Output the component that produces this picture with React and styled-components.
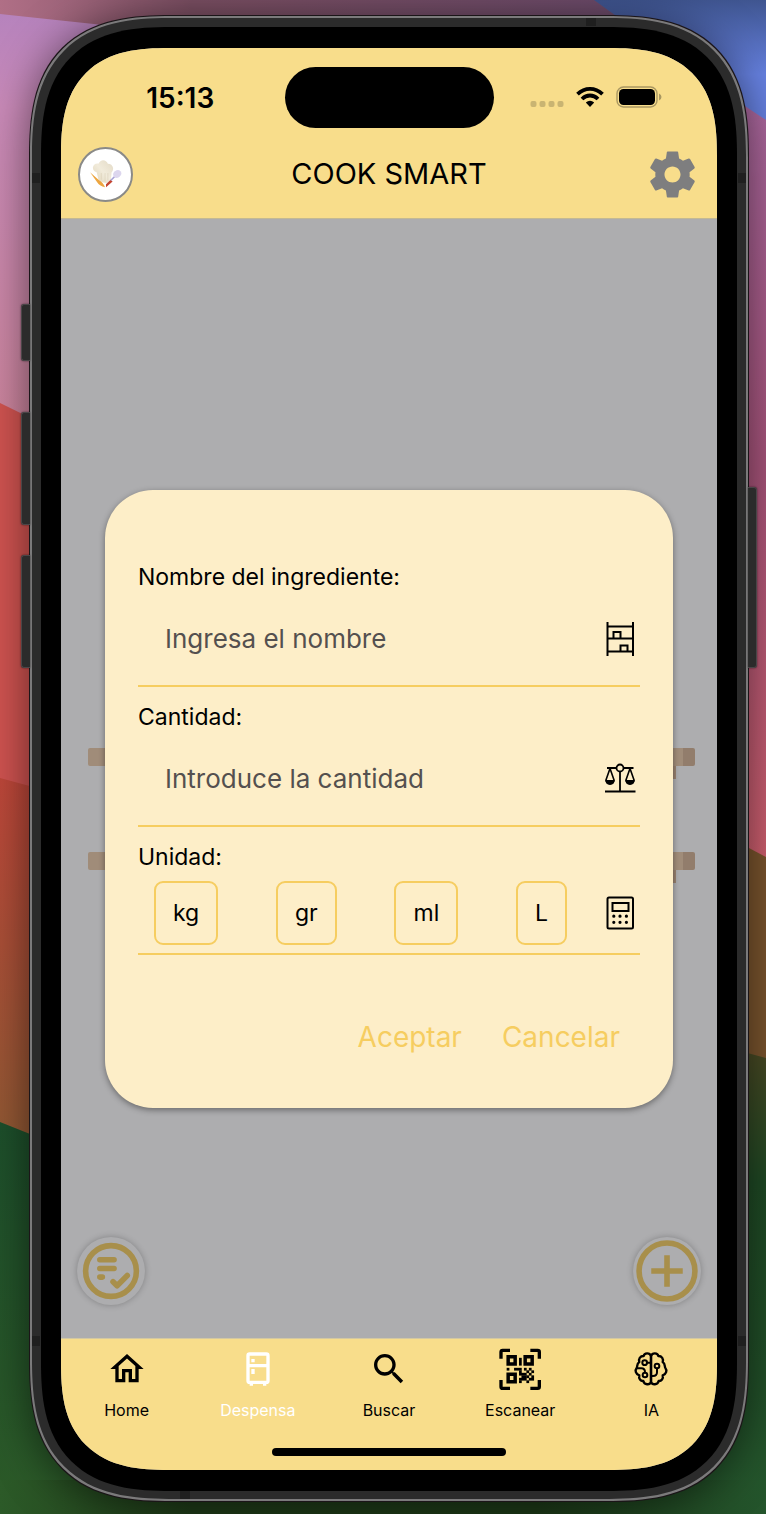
import React from "react";
import styled, { createGlobalStyle } from "styled-components";

const colors = {
  bar: "#f8dd8b",
  card: "#fdeec8",
  accent: "#f6cd60",
  dim: "#adadaf",
  fab: "#a88f4b",
  frame: "#2b2b2b",
};

const Global = createGlobalStyle`
  *, *::before, *::after { box-sizing: border-box; }
  body { margin: 0; background: #1c3a1e; }
  body, button, input { font-family: Inter, "Liberation Sans", sans-serif; }
  button { border: 0; padding: 0; background: none; color: inherit; cursor: pointer; }
  svg { display: block; }
`;

const Page = styled.div`
  position: relative;
  display: flex;
  min-height: 100vh;
  padding: 16px 18px 13px 30px;
  overflow: hidden;
`;

const Wallpaper = styled.svg`
  position: absolute;
  inset: 0;
  width: 100%;
  height: 100%;
`;

const Phone = styled.div`
  position: relative;
  flex: 1;
  display: flex;
  min-width: 0;
  padding: 9px 9px 8px;
  border: 2px solid #7b7a7b;
  background: ${colors.frame};
  border-radius: 118px;
  box-shadow: 0 0 0 1px #1b1518, 0 4px 44px rgba(0, 0, 0, 0.55);
  @supports (corner-shape: squircle) {
    border-radius: 142px;
    corner-shape: superellipse(1.4);
  }
`;

const Bezel = styled.div`
  flex: 1;
  display: flex;
  min-width: 0;
  padding: 21px 20px;
  background: #000;
  border-radius: 108px;
  @supports (corner-shape: squircle) {
    border-radius: 130px;
    corner-shape: superellipse(1.4);
  }
`;

const Screen = styled.div`
  flex: 1;
  display: flex;
  flex-direction: column;
  min-width: 0;
  overflow: hidden;
  background: ${colors.dim};
  border-radius: 88px;
  @supports (corner-shape: squircle) {
    border-radius: 108px;
    corner-shape: superellipse(1.4);
  }
`;

const SideButton = styled.span`
  position: absolute;
  ${(p) => p.$side}: -11px;
  top: ${(p) => p.$top}px;
  width: 9px;
  height: ${(p) => p.$height}px;
  background: ${colors.frame};
  border: 1px solid #4a4648;
  border-${(p) => (p.$side === "left" ? "right" : "left")}: 0;
  border-radius: ${(p) => (p.$side === "left" ? "3px 0 0 3px" : "0 3px 3px 0")};
  box-shadow: 0 0 2px rgba(0, 0, 0, 0.6);
`;

const Antenna = styled.span`
  position: absolute;
  background: #1f1f1f;
  ${(p) => p.$edge}: 0;
  ${(p) => p.$from}: ${(p) => p.$at}px;
  width: ${(p) => (p.$edge === "left" || p.$edge === "right" ? 8 : 10)}px;
  height: ${(p) => (p.$edge === "left" || p.$edge === "right" ? 10 : 8)}px;
`;

const StatusBar = styled.div`
  display: grid;
  grid-template-columns: 1fr 209px 1fr;
  align-items: center;
  padding: 19px 0 2px;
  background: ${colors.bar};
`;

const Clock = styled.time`
  padding-left: 15px;
  text-align: center;
  font-size: 28px;
  line-height: 32px;
  font-weight: 600;
`;

const Island = styled.div`
  height: 61px;
  border-radius: 31px;
  background: #000;
`;

const StatusIcons = styled.div`
  display: flex;
  align-items: center;
  gap: 12px;
  padding: 0 0 2px 36px;
`;

const Header = styled.header`
  display: grid;
  grid-template-columns: 55px 1fr 55px;
  align-items: center;
  height: 89px;
  padding: 0 17px;
  background: ${colors.bar};
  border-bottom: 1px solid #c3b994;
`;

const Logo = styled.a`
  display: grid;
  place-items: center;
  height: 55px;
  border: 2px solid #8a8a88;
  border-radius: 50%;
  background: #fff;
`;

const Title = styled.h1`
  margin: 0;
  text-align: center;
  font-size: 29px;
  line-height: 36px;
  font-weight: 400;
`;

const Main = styled.main`
  flex: 1;
  display: grid;
  grid-template-columns: minmax(0, 1fr);
  > * { grid-area: 1 / 1; }
`;

const Shelves = styled.div`
  align-self: center;
  display: grid;
  gap: 86px;
  margin: 61px 22px 0 27px;
`;

const Shelf = styled.div`
  position: relative;
  height: 18px;
  border-radius: 2px;
  background: linear-gradient(to left, #927d6c 12px, #a08c79 12px);
  &::after {
    content: "";
    position: absolute;
    top: 18px;
    right: 19px;
    width: 8px;
    height: 13px;
    background: #98816f;
  }
`;

const Fabs = styled.div`
  align-self: end;
  display: flex;
  justify-content: space-between;
  padding: 0 16px 33px;
`;

const Fab = styled.button`
  display: grid;
  place-items: center;
  width: 68px;
  height: 68px;
  border-radius: 50%;
  background: ${colors.dim};
  color: ${colors.fab};
  box-shadow: 0 0 6px rgba(0, 0, 0, 0.25);
`;

const Dialog = styled.form`
  position: relative;
  align-self: center;
  margin: 41px 44px 0;
  padding: 72px 33px 51px;
  background: ${colors.card};
  border-radius: 48px;
  box-shadow: 0 2px 6px rgba(0, 0, 0, 0.4);
`;

const Field = styled.div`
  border-bottom: 2px solid ${colors.accent};
  & + & { margin-top: 15px; }
`;

const Label = styled.label`
  display: block;
  font-size: 23px;
  line-height: 30px;
`;

const FieldRow = styled.div`
  display: flex;
  align-items: center;
  height: ${(p) => (p.$compact ? 81 : 93)}px;
  padding-left: ${(p) => (p.$compact ? 16 : 27)}px;
`;

const TextInput = styled.input`
  flex: 1;
  min-width: 0;
  height: 60px;
  padding: 0;
  border: 0;
  outline: 0;
  background: none;
  font-size: 26px;
  &::placeholder { color: #54504f; opacity: 1; }
`;

const Units = styled.div`
  flex: 1;
  display: flex;
  justify-content: space-between;
  padding-right: 33px;
`;

const Unit = styled.button`
  height: 64px;
  padding: 0 17px;
  border: 2px solid ${colors.accent};
  border-radius: 9px;
  font-size: 23px;
  color: #000;
`;

const Actions = styled.div`
  display: flex;
  justify-content: flex-end;
  gap: 40px;
  margin-top: 62px;
  padding-right: 20px;
`;

const Action = styled.button`
  color: ${colors.accent};
  font-size: 28px;
  line-height: 40px;
`;

const TabBar = styled.nav`
  background: ${colors.bar};
  border-top: 1px solid #d3c8a2;
`;

const Tabs = styled.div`
  display: grid;
  grid-template-columns: repeat(5, 1fr);
`;

const Tab = styled.a`
  display: grid;
  justify-items: center;
  gap: 10px;
  padding-top: 9px;
  color: ${(p) => (p.$active ? "#fff" : "#000")};
  font-size: 16px;
  line-height: 20px;
  text-decoration: none;
`;

const HomeBar = styled.div`
  width: 234px;
  height: 8px;
  margin: 28px auto 14px;
  border-radius: 4px;
  background: #000;
`;

const Glyph = ({ d }) => (
  <svg width="40" height="42" viewBox="0 0 24 24" fill="currentColor" aria-hidden="true">
    <path d={d} />
  </svg>
);

const HOME = "M12 5.69L17 10.19V18H15V12H9V18H7V10.19L12 5.69M12 3L2 12H5V20H11V14H13V20H19V12H22L12 3Z";
const FRIDGE =
  "M9,21V22H7V21A2,2 0 0,1 5,19V4A2,2 0 0,1 7,2H17A2,2 0 0,1 19,4V19A2,2 0 0,1 17,21V22H15V21H9M7,4V9H17V4H7M7,19H17V11H7V19M8,12H10V15H8V12M8,6H10V8H8V6Z";
const SEARCH =
  "M9.5,3A6.5,6.5 0 0,1 16,9.5C16,11.11 15.41,12.59 14.44,13.73L14.71,14H15.5L20.5,19L19,20.5L14,15.5V14.71L13.73,14.44C12.59,15.41 11.11,16 9.5,16A6.5,6.5 0 0,1 3,9.5A6.5,6.5 0 0,1 9.5,3M9.5,5C7,5 5,7 5,9.5C5,12 7,14 9.5,14C12,14 14,12 14,9.5C14,7 12,5 9.5,5Z";
const GEAR =
  "M19.43 12.98c.04-.32.07-.64.07-.98s-.03-.66-.07-.98l2.11-1.65c.19-.15.24-.42.12-.64l-2-3.46c-.12-.22-.39-.3-.61-.22l-2.49 1c-.52-.4-1.08-.73-1.69-.98l-.38-2.65C14.46 2.18 14.25 2 14 2h-4c-.25 0-.46.18-.49.42l-.38 2.65c-.61.25-1.17.59-1.69.98l-2.49-1c-.23-.09-.49 0-.61.22l-2 3.46c-.13.22-.07.49.12.64l2.11 1.65c-.04.32-.07.65-.07.98s.03.66.07.98l-2.11 1.65c-.19.15-.24.42-.12.64l2 3.46c.12.22.39.3.61.22l2.49-1c.52.4 1.08.73 1.69.98l.38 2.65c.03.24.24.42.49.42h4c.25 0 .46-.18.49-.42l.38-2.65c.61-.25 1.17-.59 1.69-.98l2.49 1c.23.09.49 0 .61-.22l2-3.46c.12-.22.07-.49-.12-.64l-2.11-1.65zM12 15.5c-1.93 0-3.5-1.57-3.5-3.5s1.57-3.5 3.5-3.5 3.5 1.57 3.5 3.5-1.57 3.5-3.5 3.5z";

const QR_CELLS = [
  [5, 1, 1, 3], [0, 5, 1, 1], [3, 5, 3, 1], [7, 5, 1, 1], [9, 5, 1, 1],
  [5, 6, 1, 1], [8, 6, 1, 1], [10, 6, 1, 1], [5, 7, 2, 1], [7, 7, 1, 1], [9, 7, 1, 1],
  [6, 8, 2, 1], [8, 8, 1, 1], [10, 8, 1, 1], [5, 9, 3, 1], [9, 9, 2, 1], [5, 10, 1, 1], [8, 10, 1, 1],
];

const QrIcon = () => (
  <svg width="42" height="42" viewBox="25 23 126 126" fill="none" stroke="currentColor" aria-hidden="true">
    <path d="M31 55V35Q31 30 36 30H58M119 30H141Q146 30 146 35V55M146 119V139Q146 144 141 144H119M58 144H36Q31 144 31 139V119" strokeWidth="10" />
    <path d="M52.500 49H73.500V71H52.500ZM103.500 49H124.500V71H103.500ZM52.500 102H73.500V124H52.500Z" strokeWidth="10.500" />
    <g fill="currentColor" stroke="none">
      {QR_CELLS.map(([x, y, w, h]) => (
        <rect key={`${x}-${y}`} x={48 + x * 7.4} y={45 + y * 7.5} width={w * 7.4 + 0.8} height={h * 7.5 + 0.8} />
      ))}
    </g>
  </svg>
);

const BrainIcon = () => (
  <svg width="36" height="42" viewBox="430 25 108 126" fill="none" stroke="currentColor" strokeWidth="7" strokeLinecap="round" strokeLinejoin="round" aria-hidden="true">
    <path d="M484 49C480 38 464 39 462 49C451 49 446 58 449 67C440 72 444 82 441 85C435 92 438 103 449 107C446 117 453 125 461 124C464 136 480 137 484 127Z" />
    <path d="M484 49C488 38 504 39 506 49C517 49 522 58 519 67C528 72 524 82 527 85C533 92 530 103 519 107C522 117 515 125 507 124C504 136 488 137 484 127Z" />
    <circle cx="465" cy="69" r="7" strokeWidth="6" />
    <circle cx="502" cy="79" r="7" strokeWidth="6" />
    <circle cx="466" cy="106" r="7" strokeWidth="6" />
    <path d="M473 69H484M441 86H455Q466 86 466 98M502 87V98Q502 109 490 109H484" strokeWidth="6" />
  </svg>
);

const ShelfIcon = () => (
  <svg width="40" height="40" viewBox="0 0 40 40" fill="none" stroke="#000" strokeWidth="2" aria-hidden="true">
    <path d="M7.500 3V37M33 3V37M7 7.500H33.500M7 19.500H33.500M7 32.500H33.500M13.500 19V13H20.500V19M20.500 32V26.500H27.500V32" />
  </svg>
);

const ScaleIcon = () => (
  <svg width="40" height="40" viewBox="0 0 40 40" fill="none" stroke="#000" strokeWidth="1.800" aria-hidden="true">
    <circle cx="20" cy="9" r="3.500" />
    <path d="M7 9H16.500M23.500 9H33.500M20 12.500V32.500M5 32.500H35.500" />
    <path d="M10 9.500L5.800 21.500M10 9.500L14.200 21.500M30 9.500L25.800 21.500M30 9.500L34.200 21.500" strokeWidth="1.600" />
    <path d="M5.500 21.500H14.500Q14 25.500 10 25.500Q6 25.500 5.500 21.500ZM25.500 21.500H34.500Q34 25.500 30 25.500Q26 25.500 25.500 21.500Z" fill="#000" strokeWidth="1" />
  </svg>
);

const CalculatorIcon = () => (
  <svg width="40" height="40" viewBox="0 0 40 40" fill="none" stroke="#000" strokeWidth="2" aria-hidden="true">
    <rect x="7.500" y="4.500" width="25.500" height="31" rx="1.500" />
    <rect x="12.500" y="10" width="16" height="8" />
    <path d="M13.800 23.200h.01M20 23.200h.01M26.400 23.200h.01M13.800 29.300h.01M20 29.300h.01M26.400 29.300h.01" strokeWidth="3.200" strokeLinecap="round" />
  </svg>
);

const ChefIcon = () => (
  <svg width="34" height="30" viewBox="0 0 36 32" aria-hidden="true">
    <defs>
      <linearGradient id="hat" x1="0" y1="1" x2="1" y2="0">
        <stop offset="0" stopColor="#e0d5ba" />
        <stop offset=".5" stopColor="#f1ebdb" />
        <stop offset="1" stopColor="#e3dac6" />
      </linearGradient>
    </defs>
    <path d="M8 14C2 13 3 4 10 5C12 0 18 0 20 5C26 5 27 12 24 14L23 24Q16 28 10 22Z" fill="url(#hat)" />
    <path d="M13 15V22M17 15V24M20 15V23" stroke="#d8cdb4" strokeWidth=".6" />
    <path d="M1 14L10 22Q15 25 17 30Q11 29 8 24Z" fill="#eda640" />
    <path d="M18 30L18 27L23 22L25 24Z" fill="#c3432f" />
    <path d="M23 23L28 18" stroke="#a9a3d6" strokeWidth="1.600" />
    <ellipse cx="30" cy="16" rx="4.500" ry="3.800" fill="#dcd6ee" transform="rotate(-40 30 16)" />
  </svg>
);

const SignalIcon = () => (
  <svg width="34" height="22" viewBox="0 0 34 22" fill="#c9b472" aria-hidden="true">
    {[0, 9, 18, 27].map((x) => (
      <rect key={x} x={x + 0.5} y="15" width="6" height="6" rx="2" />
    ))}
  </svg>
);

const WifiIcon = () => (
  <svg width="28" height="22" viewBox="0 0 28 22" fill="none" stroke="#000" strokeWidth="3.800" aria-hidden="true">
    <path d="M1.500 8.200Q7 2.900 14 2.900T26.500 8.200" />
    <path d="M6 13Q9.500 9.500 14 9.500T22 13" />
    <path d="M9.800 16.500Q14 13 18.200 16.500L14 21Z" fill="#000" stroke="none" />
  </svg>
);

const BatteryIcon = () => (
  <svg width="46" height="22" viewBox="0 0 46 22" aria-hidden="true">
    <rect x="1" y="1" width="40" height="20" rx="6.500" fill="none" stroke="#a99761" strokeWidth="1.400" />
    <rect x="3" y="3" width="36" height="16" rx="4.500" />
    <path d="M43 7.500Q45.500 8.500 45.500 11T43 14.500Z" fill="#a99761" />
  </svg>
);

const ListFabIcon = () => (
  <svg width="64" height="64" viewBox="0 0 63 63" fill="none" stroke="currentColor" strokeWidth="5.500" strokeLinecap="round" strokeLinejoin="round" aria-hidden="true">
    <circle cx="31.500" cy="31.500" r="25" />
    <path d="M20.500 20.500H34.500M20.500 29H34.500M20.500 37.500H23M33.500 42L37.500 46L47.500 36" />
  </svg>
);

const PlusFabIcon = () => (
  <svg width="64" height="64" viewBox="0 0 63 63" fill="none" stroke="currentColor" strokeWidth="5.500" aria-hidden="true">
    <circle cx="31.500" cy="31.500" r="27.500" />
    <path d="M31.500 16V47M16 31.500H47" />
  </svg>
);

const Backdrop = () => (
  <Wallpaper viewBox="0 0 766 1514" preserveAspectRatio="none" aria-hidden="true">
    <defs>
      <linearGradient id="lilac" x1="0" y1="0" x2="0" y2="1">
        <stop offset="0" stopColor="#b683bd" />
        <stop offset=".2" stopColor="#c98ab8" />
        <stop offset="1" stopColor="#cb8397" />
      </linearGradient>
      <linearGradient id="rust" x1="0" y1="0" x2="0" y2="1">
        <stop offset="0" stopColor="#be473a" />
        <stop offset="1" stopColor="#8d5a33" />
      </linearGradient>
      <linearGradient id="rose" x1="0" y1="0" x2="0" y2="1">
        <stop offset="0" stopColor="#ac6aa2" />
        <stop offset=".5" stopColor="#a9557c" />
        <stop offset="1" stopColor="#d0606f" />
      </linearGradient>
      <linearGradient id="blue" x1="0" y1="0" x2="0" y2="1">
        <stop offset="0" stopColor="#3f5590" />
        <stop offset=".6" stopColor="#6681e0" />
      </linearGradient>
      <linearGradient id="moss" x1="0" y1="0" x2="0" y2="1">
        <stop offset="0" stopColor="#4d4a24" />
        <stop offset=".3" stopColor="#1f4a25" />
        <stop offset="1" stopColor="#24552c" />
      </linearGradient>
      <linearGradient id="leaf" x1="0" y1="0" x2="0" y2="1">
        <stop offset="0" stopColor="#1d4f2b" />
        <stop offset="1" stopColor="#2c5a28" />
      </linearGradient>
      <linearGradient id="lawn" x1="0" y1="0" x2="1" y2="0">
        <stop offset="0" stopColor="#2c5a28" />
        <stop offset=".25" stopColor="#1f3b18" />
        <stop offset=".7" stopColor="#1d3a18" />
        <stop offset="1" stopColor="#24552c" />
      </linearGradient>
      <linearGradient id="plum" x1="0" y1="0" x2="1" y2="0">
        <stop offset="0" stopColor="#b06f86" />
        <stop offset=".25" stopColor="#7d5064" />
        <stop offset="1" stopColor="#684a6e" />
      </linearGradient>
    </defs>
    <rect width="766" height="60" fill="url(#plum)" />
    <path d="M0 14L150 30V480H0Z" fill="url(#lilac)" />
    <path d="M0 403L100 452V810H0Z" fill="#cf5350" />
    <path d="M0 778L100 805V1170H0Z" fill="url(#rust)" />
    <path d="M0 1122L100 1162V1514H0Z" fill="url(#leaf)" />
    <path d="M594 0H766V124L740 105Z" fill="url(#blue)" />
    <path d="M766 120L700 76V860H766Z" fill="url(#rose)" />
    <path d="M700 822L766 857V1070H700Z" fill="#7b552e" />
    <path d="M700 1040L766 1058V1514H700Z" fill="url(#moss)" />
    <rect y="1480" width="766" height="34" fill="url(#lawn)" />
  </Wallpaper>
);

const UNITS = ["kg", "gr", "ml", "L"];

const TABS = [
  { name: "Home", icon: <Glyph d={HOME} /> },
  { name: "Despensa", icon: <Glyph d={FRIDGE} />, active: true },
  { name: "Buscar", icon: <Glyph d={SEARCH} /> },
  { name: "Escanear", icon: <QrIcon /> },
  { name: "IA", icon: <BrainIcon /> },
];

export default function App() {
  return (
    <Page>
      <Global />
      <Backdrop />
      <Phone>
        <SideButton $side="left" $top={286} $height={57} />
        <SideButton $side="left" $top={394} $height={113} />
        <SideButton $side="left" $top={537} $height={113} />
        <SideButton $side="right" $top={469} $height={181} />
        <Antenna $edge="top" $from="right" $at={150} />
        <Antenna $edge="bottom" $from="left" $at={148} />
        <Antenna $edge="left" $from="top" $at={155} />
        <Antenna $edge="right" $from="top" $at={155} />
        <Antenna $edge="left" $from="bottom" $at={153} />
        <Antenna $edge="right" $from="bottom" $at={153} />
        <Bezel>
          <Screen>
            <StatusBar>
              <Clock>15:13</Clock>
              <Island />
              <StatusIcons>
                <SignalIcon />
                <WifiIcon />
                <BatteryIcon />
              </StatusIcons>
            </StatusBar>
            <Header>
              <Logo href="#" aria-label="Cook Smart">
                <ChefIcon />
              </Logo>
              <Title>COOK SMART</Title>
              <button type="button" aria-label="Ajustes">
                <svg width="55" height="55" viewBox="0 0 24 24" fill="#7e7e7f" aria-hidden="true">
                  <path d={GEAR} />
                </svg>
              </button>
            </Header>
            <Main>
              <Shelves>
                <Shelf />
                <Shelf />
              </Shelves>
              <Fabs>
                <Fab type="button" aria-label="Lista">
                  <ListFabIcon />
                </Fab>
                <Fab type="button" aria-label="Agregar">
                  <PlusFabIcon />
                </Fab>
              </Fabs>
              <Dialog onSubmit={(e) => e.preventDefault()}>
                <Field>
                  <Label htmlFor="nombre">Nombre del ingrediente:</Label>
                  <FieldRow>
                    <TextInput id="nombre" placeholder="Ingresa el nombre" />
                    <ShelfIcon />
                  </FieldRow>
                </Field>
                <Field>
                  <Label htmlFor="cantidad">Cantidad:</Label>
                  <FieldRow>
                    <TextInput id="cantidad" placeholder="Introduce la cantidad" />
                    <ScaleIcon />
                  </FieldRow>
                </Field>
                <Field role="group" aria-labelledby="unidad">
                  <Label as="div" id="unidad">Unidad:</Label>
                  <FieldRow $compact>
                    <Units>
                      {UNITS.map((unit) => (
                        <Unit key={unit} type="button">{unit}</Unit>
                      ))}
                    </Units>
                    <CalculatorIcon />
                  </FieldRow>
                </Field>
                <Actions>
                  <Action type="submit">Aceptar</Action>
                  <Action type="button">Cancelar</Action>
                </Actions>
              </Dialog>
            </Main>
            <TabBar>
              <Tabs>
                {TABS.map(({ name, icon, active }) => (
                  <Tab key={name} href="#" $active={active} aria-current={active ? "page" : undefined}>
                    {icon}
                    {name}
                  </Tab>
                ))}
              </Tabs>
              <HomeBar />
            </TabBar>
          </Screen>
        </Bezel>
      </Phone>
    </Page>
  );
}
